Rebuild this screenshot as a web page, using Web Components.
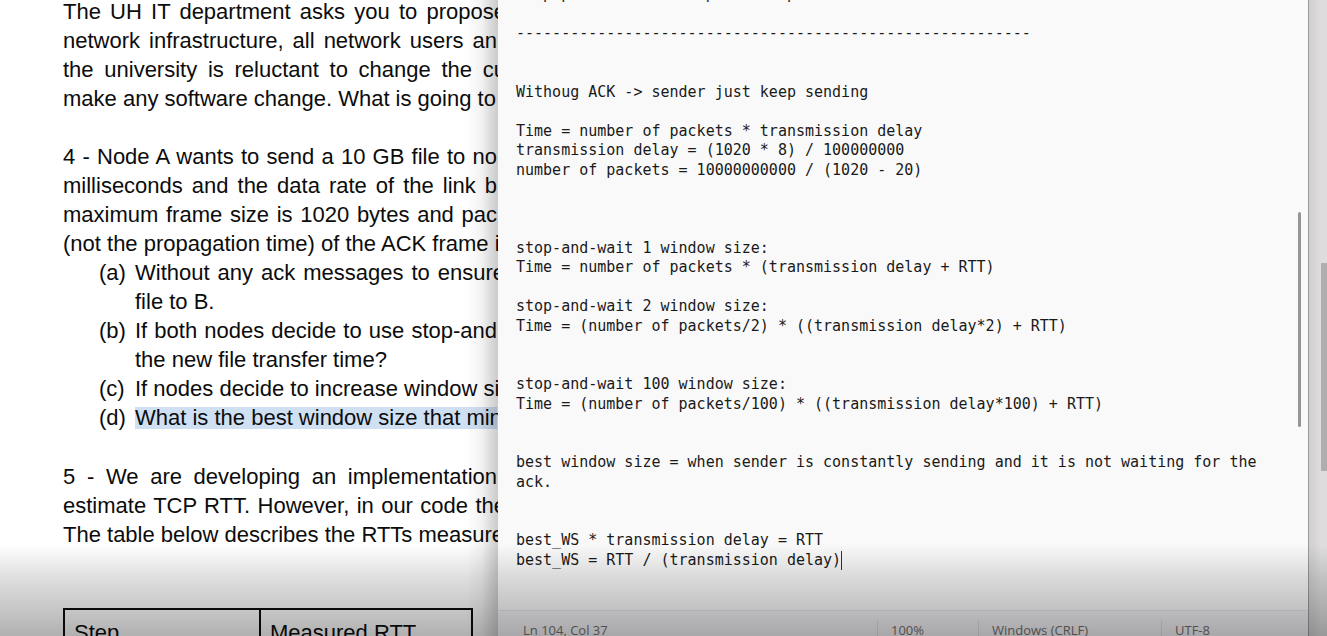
<!DOCTYPE html>
<html lang="en">
<head>
<meta charset="utf-8">
<title>Homework notes</title>
<style>
html, body { margin: 0; height: 100%; overflow: hidden; }
</style>
</head>
<body>
<lecture-screen></lecture-screen>

<template id="screen">
<style>
:host { display: grid; grid-template-columns: 498px minmax(0, 1fr) 18px; grid-template-rows: minmax(0, 1fr); height: 100vh; overflow: hidden; position: relative; background: #fff; }
.fade { position: absolute; left: 0; right: 0; bottom: 0; height: 92px; pointer-events: none; background: linear-gradient(rgba(0,0,0,0), rgba(0,0,0,.12) 35%, rgba(0,0,0,.22) 70%, rgba(0,0,0,.31)); }
</style>
<doc-page></doc-page>
<note-window></note-window>
<page-scroll></page-scroll>
<div class="fade"></div>
</template>

<template id="doc">
<style>
:host { display: block; overflow: hidden; position: relative; background: #fff; color: #0c0c0c; font: 22px/29px "Liberation Sans", Arial, sans-serif; }
:host::after { content: ""; position: absolute; top: 0; right: 0; bottom: 0; width: 32px; background: linear-gradient(to right, rgba(0,0,0,0), rgba(0,0,0,.05) 50%, rgba(0,0,0,.2)); border-right: 1px solid rgba(0,0,0,.2); box-sizing: border-box; }
article { padding-left: 63px; margin-top: -3px; }
p { margin: 0 0 29px; }
doc-line { width: 434px; }
doc-line[wide] { width: 443px; }
li doc-line { width: 362px; }
li doc-line[wide] { width: 370px; }
p.lead { margin: 0; }
ol { list-style: none; margin: 0 0 29px; padding: 0 0 0 36px; }
li { display: grid; grid-template-columns: 36px max-content; }
mark { background: #cfe0f3; color: inherit; line-height: 22px; display: block; margin: 4px 0; width: 362px; white-space: nowrap; }
table { border-collapse: collapse; margin-top: 59px; }
th { border: 2px solid #0c0c0c; font-weight: 400; text-align: left; padding: 8px 9px; white-space: nowrap; }
th:first-child { width: 176px; }
th:last-child { width: 192px; }
</style>
<article>
<p><doc-line wide justify>The UH IT department asks you to propose</doc-line><doc-line justify>network infrastructure, all network users an</doc-line><doc-line wide justify>the university is reluctant to change the cu</doc-line><doc-line>make any software change. What is going to</doc-line></p>
<p class="lead"><doc-line justify>4 - Node A wants to send a 10 GB file to no</doc-line><doc-line justify>milliseconds and the data rate of the link b</doc-line><doc-line justify>maximum frame size is 1020 bytes and pac</doc-line><doc-line>(not the propagation time) of the ACK frame i</doc-line></p>
<ol>
<li><span>(a)</span><span><doc-line wide justify>Without any ack messages to ensure</doc-line><doc-line>file to B.</doc-line></span></li>
<li><span>(b)</span><span><doc-line justify>If both nodes decide to use stop-and</doc-line><doc-line>the new file transfer time?</doc-line></span></li>
<li><span>(c)</span><span><doc-line>If nodes decide to increase window si</doc-line></span></li>
<li><span>(d)</span><span><mark>What is the best window size that min</mark></span></li>
</ol>
<p><doc-line justify>5 - We are developing an implementation</doc-line><doc-line wide justify>estimate TCP RTT. However, in our code the</doc-line><doc-line>The table below describes the RTTs measure</doc-line></p>
<table><thead><tr><th scope="col">Step</th><th scope="col">Measured RTT</th></tr></thead></table>
</article>
</template>

<template id="line">
<style>
:host { display: block; white-space: nowrap; }
:host([justify]) { text-align: justify; text-align-last: justify; white-space: normal; }
</style>
<slot></slot>
</template>

<template id="note">
<style>
:host { display: grid; grid-template-rows: minmax(0, 1fr) 26px; min-width: 0; background: #f9f9f9; border-right: 1px solid #9a9a9a; box-sizing: border-box; }
.edit { position: relative; overflow: hidden; font: 15px/1.3 "DejaVu Sans Mono", monospace; color: #1a1a1a; }
textarea { display: block; box-sizing: border-box; width: 100%; height: 32lh; margin: -15px 0 0; padding: 0 24px 0 18px; border: 0; outline: 0; resize: none; overflow: hidden; background: none; font: inherit; color: inherit; }
.caret { position: absolute; left: calc(18px + 36ch); top: calc(29lh - 15px); width: 1px; height: 1lh; background: #333; }
.thumb { position: absolute; right: 7px; top: 212px; width: 3px; height: 215px; border-radius: 2px; background: #959595; }
</style>
<div class="edit">
<textarea aria-label="Notes" spellcheck="false">   p p               p        p

---------------------------------------------------------


Withoug ACK -&gt; sender just keep sending

Time = number of packets * transmission delay
transmission delay = (1020 * 8) / 100000000
number of packets = 10000000000 / (1020 - 20)



stop-and-wait 1 window size:
Time = number of packets * (transmission delay + RTT)

stop-and-wait 2 window size:
Time = (number of packets/2) * ((transmission delay*2) + RTT)


stop-and-wait 100 window size:
Time = (number of packets/100) * ((transmission delay*100) + RTT)


best window size = when sender is constantly sending and it is not waiting for the ack.


best_WS * transmission delay = RTT
best_WS = RTT / (transmission delay)</textarea>
<span class="caret"></span><span class="thumb"></span>
</div>
<status-bar></status-bar>
</template>

<template id="status">
<style>
:host { display: grid; grid-template-columns: minmax(0, 1fr) 101px 183px 147px; overflow: hidden; box-sizing: border-box; border-top: 1px solid #e4e2e6; background: #f3f1f5; color: #707070; font: 13px/38px "Open Sans", "Noto Sans", sans-serif; }
span { padding-left: 13px; height: 38px; white-space: nowrap; }
span:first-of-type { padding-left: 25px; }
span + span { border-left: 1px solid #dedce0; margin-top: 9px; line-height: 20px; }
</style>
<span>Ln 104, Col 37</span><span>100%</span><span>Windows (CRLF)</span><span>UTF-8</span>
</template>

<template id="scroll">
<style>
:host { display: flex; justify-content: flex-end; background: linear-gradient(to right, #cfcfcf, #dfdddd 12px); }
div { width: 6px; height: 208px; margin-top: 263px; background: #b0aeae; }
</style>
<div></div>
</template>

<script>
const define = (tag, id) => customElements.define(tag, class extends HTMLElement {
  constructor() {
    super();
    this.attachShadow({ mode: "open" }).append(document.getElementById(id).content.cloneNode(true));
  }
});
define("doc-line", "line");
define("doc-page", "doc");
define("status-bar", "status");
define("note-window", "note");
define("page-scroll", "scroll");
define("lecture-screen", "screen");
</script>
</body>
</html>
